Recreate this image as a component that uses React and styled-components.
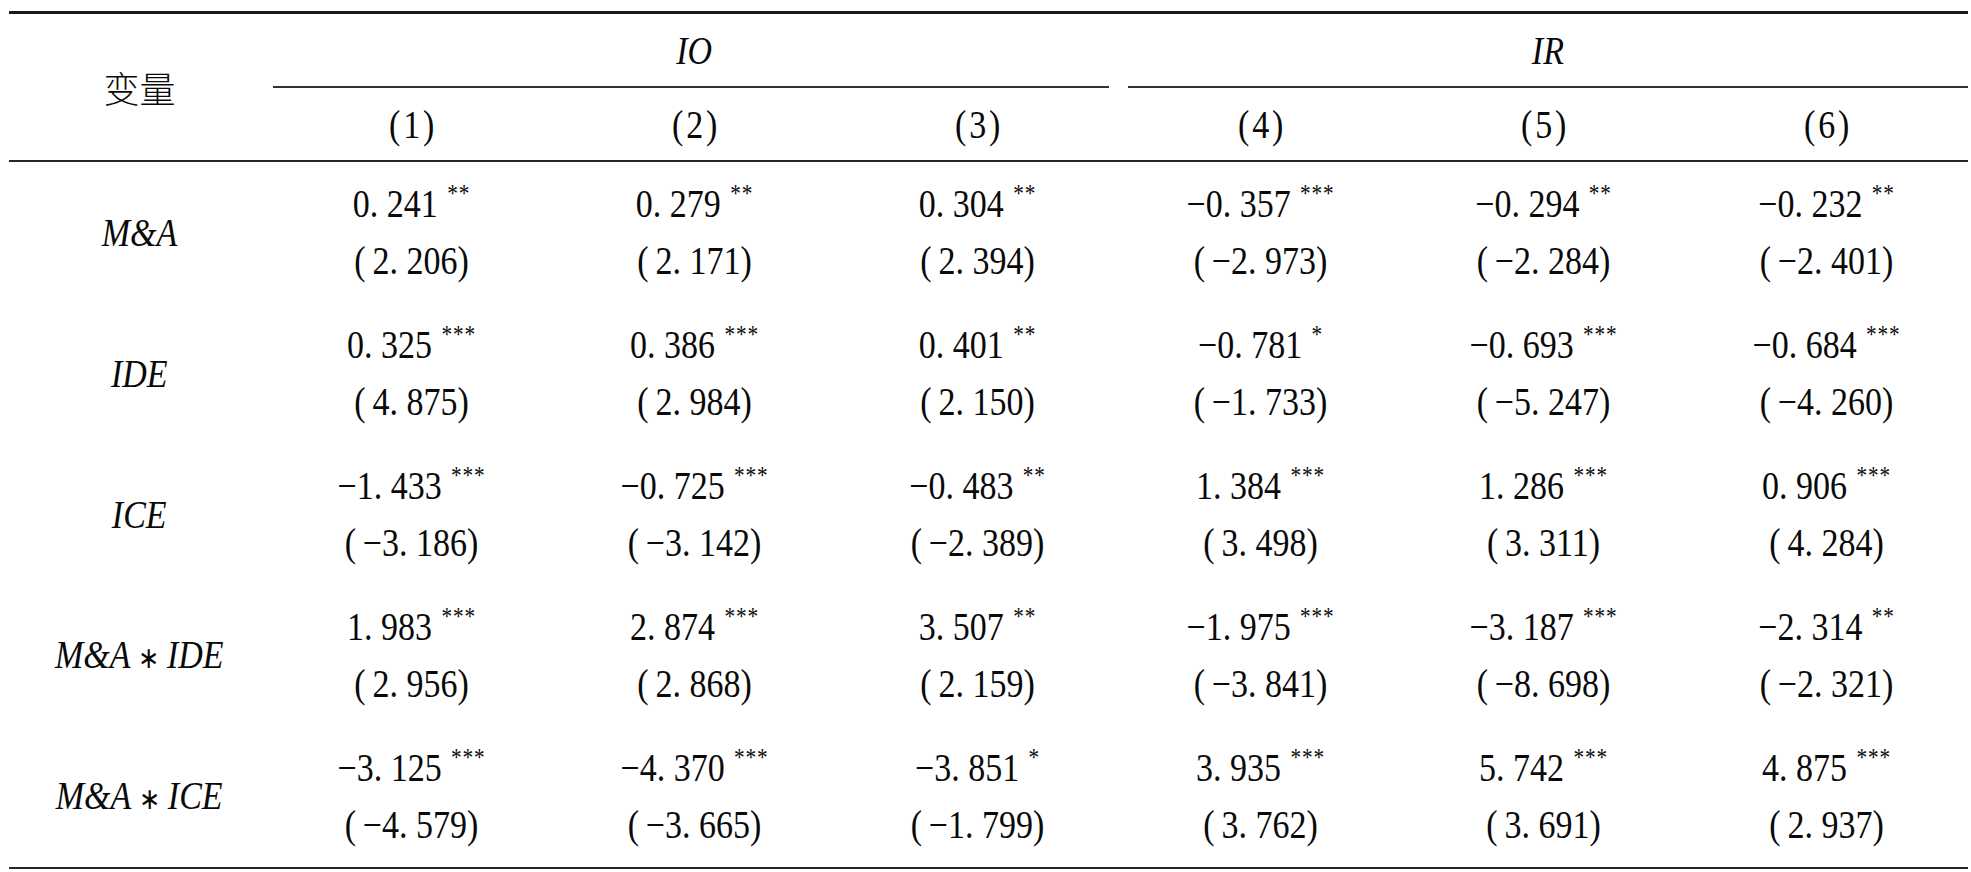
import styled, { createGlobalStyle } from "styled-components"

const GlobalStyle = createGlobalStyle`
  html, body {
    margin: 0;
    padding: 0;
    background: #fff;
  }
  body {
    font-family: "Liberation Serif", "Times New Roman", serif;
    color: #0a0a0a;
  }
`

const Page = styled.div`
  padding: 11px 3px 0 9px;
`

const Table = styled.div`
  display: grid;
  grid-template-columns: 261px repeat(6, 283px);
  grid-template-rows: 74px 74px;
  grid-auto-rows: 141px;
  border-top: 3px solid #1a1a1a;
  border-bottom: 2px solid #262626;
  font-size: 40px;
  line-height: 57px;
`

// the typeface of the source is a tall, narrow Times
const Squeeze = styled.span`
  display: inline-block;
  transform: scaleX(0.85);
  white-space: nowrap;
`

const Corner = styled.div`
  grid-row: 1 / span 2;
  display: flex;
  align-items: center;
  justify-content: center;
  border-bottom: 2px solid #262626;
  font-family: "Noto Sans CJK SC", sans-serif;
  font-weight: 300;
  font-size: 36px;
`

const GroupHead = styled.div`
  grid-column: span 3;
  display: flex;
  align-items: center;
  justify-content: center;
  margin: 0 ${(props) => props.$right || 0}px 0 ${(props) => props.$left || 0}px;
  padding-left: ${(props) => props.$shift || 0}px;
  border-bottom: 2px solid #333;
  font-style: italic;
`

const ColHead = styled.div`
  display: flex;
  align-items: center;
  justify-content: center;
  border-bottom: 2px solid #262626;
`

const RowLabel = styled.div`
  display: flex;
  align-items: center;
  justify-content: center;
  font-style: italic;
`

const Op = styled.span`
  font-style: normal;
  font-size: 30px;
  margin: 0 9px;
`

const Cell = styled.div`
  display: flex;
  flex-direction: column;
  align-items: center;
  justify-content: center;
  padding-bottom: 11px;
  transform: scaleX(0.85);
`

const Line = styled.div`
  white-space: nowrap;
`

const Stars = styled.span`
  font-size: 25px;
  margin-left: 11px;
  vertical-align: 15px;
  letter-spacing: 1px;
`

const rows = [
  {
    label: ["M&A"],
    cells: [
      ["0. 241", "**", "2. 206"],
      ["0. 279", "**", "2. 171"],
      ["0. 304", "**", "2. 394"],
      ["−0. 357", "***", "−2. 973"],
      ["−0. 294", "**", "−2. 284"],
      ["−0. 232", "**", "−2. 401"],
    ],
  },
  {
    label: ["IDE"],
    cells: [
      ["0. 325", "***", "4. 875"],
      ["0. 386", "***", "2. 984"],
      ["0. 401", "**", "2. 150"],
      ["−0. 781", "*", "−1. 733"],
      ["−0. 693", "***", "−5. 247"],
      ["−0. 684", "***", "−4. 260"],
    ],
  },
  {
    label: ["ICE"],
    cells: [
      ["−1. 433", "***", "−3. 186"],
      ["−0. 725", "***", "−3. 142"],
      ["−0. 483", "**", "−2. 389"],
      ["1. 384", "***", "3. 498"],
      ["1. 286", "***", "3. 311"],
      ["0. 906", "***", "4. 284"],
    ],
  },
  {
    label: ["M&A", "IDE"],
    cells: [
      ["1. 983", "***", "2. 956"],
      ["2. 874", "***", "2. 868"],
      ["3. 507", "**", "2. 159"],
      ["−1. 975", "***", "−3. 841"],
      ["−3. 187", "***", "−8. 698"],
      ["−2. 314", "**", "−2. 321"],
    ],
  },
  {
    label: ["M&A", "ICE"],
    cells: [
      ["−3. 125", "***", "−4. 579"],
      ["−4. 370", "***", "−3. 665"],
      ["−3. 851", "*", "−1. 799"],
      ["3. 935", "***", "3. 762"],
      ["5. 742", "***", "3. 691"],
      ["4. 875", "***", "2. 937"],
    ],
  },
]

function App() {
  return (
    <>
      <GlobalStyle />
      <Page>
        <Table>
          <Corner>变量</Corner>
          <GroupHead $left={3} $right={10} $shift={7}>
            <Squeeze>IO</Squeeze>
          </GroupHead>
          <GroupHead $left={9}>
            <Squeeze>IR</Squeeze>
          </GroupHead>
          {[1, 2, 3, 4, 5, 6].map((n) => (
            <ColHead key={n}>
              <Squeeze>{`(\u200a${n}\u200a)`}</Squeeze>
            </ColHead>
          ))}

          {rows.map((row) => [
            <RowLabel key={row.label.join()}>
              <Squeeze>
                {row.label[0]}
                {row.label[1] && (
                  <>
                    <Op>∗</Op>
                    {row.label[1]}
                  </>
                )}
              </Squeeze>
            </RowLabel>,
            ...row.cells.map(([coef, stars, t], i) => (
              <Cell key={row.label.join() + i}>
                <Line>
                  {coef}
                  <Stars>{stars}</Stars>
                </Line>
                <Line>{`(\u2009${t})`}</Line>
              </Cell>
            )),
          ])}
        </Table>
      </Page>
    </>
  )
}

export default App
